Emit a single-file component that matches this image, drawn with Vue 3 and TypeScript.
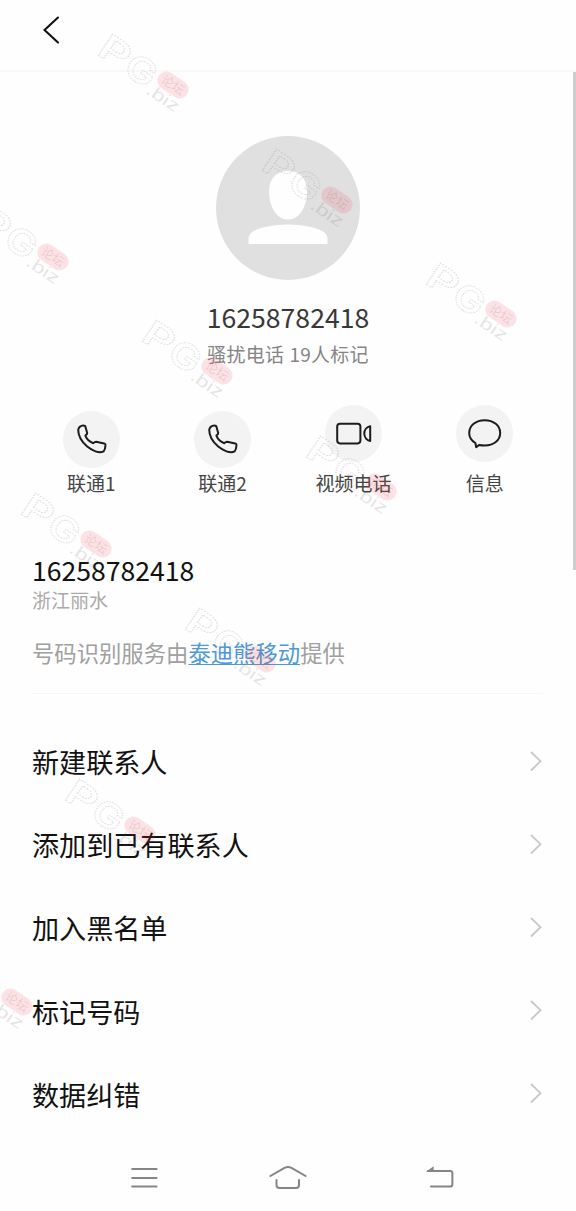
<script setup lang="ts">
interface Action {
  label: string
  icon: 'phone' | 'video' | 'message'
}

interface Mark {
  x: number
  y: number
}

const phoneNumber = '16258782418'

const actions: Action[] = [
  { label: '联通1', icon: 'phone' },
  { label: '联通2', icon: 'phone' },
  { label: '视频电话', icon: 'video' },
  { label: '信息', icon: 'message' },
]

const menu: string[] = ['新建联系人', '添加到已有联系人', '加入黑名单', '标记号码', '数据纠错']

const marks: Mark[] = [
  { x: 173, y: 85 },
  { x: 337, y: 200 },
  { x: 53, y: 257 },
  { x: 501, y: 314 },
  { x: 217, y: 371 },
  { x: 381, y: 487 },
  { x: 96, y: 544 },
  { x: 260, y: 659 },
  { x: 140, y: 830 },
  { x: 17, y: 1002 },
]
</script>

<template>
  <div class="screen">
    <header class="topbar">
      <svg class="back" width="20" height="30" viewBox="0 0 20 30">
        <path d="M16 2.5 L2.5 15 L16 27.5" />
      </svg>
    </header>

    <main class="content">
      <section class="profile">
        <svg class="avatar" width="144" height="144" viewBox="0 0 144 144">
          <circle cx="72" cy="72" r="72" fill="#e0e0e0" />
          <path
            d="M72 35 C84 35 91 43 91 55 C91 70 84 83.5 72 83.5 C60 83.5 53 70 53 55 C53 43 60 35 72 35 Z"
            fill="#fefefe"
          />
          <path
            d="M32.5 107 V103 C32.5 97 38 94 47 91.5 C62 87.5 82 87.5 97 91.5 C106 94 111.5 97 111.5 103 V107 Q111.5 108 110 108 H34 Q32.5 108 32.5 107 Z"
            fill="#fefefe"
          />
        </svg>
        <h1 class="title">{{ phoneNumber }}</h1>
        <p class="tag">骚扰电话 19人标记</p>
      </section>

      <section class="actions">
        <div v-for="a in actions" :key="a.label" class="action">
          <div class="bubble">
            <svg v-if="a.icon === 'phone'" width="57" height="57" viewBox="0 0 57 57">
              <path
                d="M18.4 14.9 Q20.6 14.2 22.3 15.2 L24.2 22 Q24.3 23 22.4 24.6 C23.6 27.8 27.2 31 30.4 32.2 Q31.8 30.6 33.2 30.7 L41.2 32.4 Q42.6 32.8 42.5 34.2 C42.3 37.2 41.8 39 40.6 40.4 C36 42.6 29 39.6 24.2 35.6 C18.6 30.8 15.2 24.6 15.2 18.8 Q15.6 16 18.4 14.9 Z"
              />
            </svg>
            <svg v-else-if="a.icon === 'video'" width="57" height="57" viewBox="0 0 57 57">
              <rect x="12.2" y="18.8" width="23.2" height="19.6" rx="2.8" />
              <path d="M45.2 21.2 V36 C42 35.4 39.3 32.5 39.3 28.6 C39.3 24.7 42 21.8 45.2 21.2 Z" />
            </svg>
            <svg v-else width="57" height="57" viewBox="0 0 57 57">
              <path
                d="M19.4 38 C15.6 35.8 13.2 32.2 13.2 28 C13.2 20.6 19.8 15.2 28.7 15.2 C37.6 15.2 44.2 20.6 44.2 28 C44.2 35.4 37.6 40.4 28.7 40.4 C26.6 40.4 24.6 40.2 23 39.9 L20.2 42.2 Z"
              />
            </svg>
          </div>
          <span class="label">{{ a.label }}</span>
        </div>
      </section>

      <section class="info">
        <div class="number">{{ phoneNumber }}</div>
        <div class="place">浙江丽水</div>
        <p class="provider">号码识别服务由<a class="link">泰迪熊移动</a>提供</p>
      </section>

      <ul class="menu">
        <li v-for="item in menu" :key="item" class="row">
          <span>{{ item }}</span>
          <svg class="chevron" width="14" height="24" viewBox="0 0 14 24">
            <path d="M2 2 L11.5 11.2 L2 20.5" />
          </svg>
        </li>
      </ul>
    </main>

    <nav class="navbar">
      <svg width="28" height="24" viewBox="0 0 28 24">
        <path d="M2.2 3 H26.6 M2.2 12 H26.6 M2.2 20.5 H26.6" />
      </svg>
      <svg class="home" width="40" height="28" viewBox="0 0 40 28">
        <path d="M2.4 12 L16.5 3.8 Q20 2 23.5 3.8 L37.6 12 M8.5 16 V21 Q8.5 24 11.5 24 H28 Q31 24 31 21 V16" />
      </svg>
      <svg width="30" height="28" viewBox="0 0 30 28">
        <path d="M3 7 H25 Q27.4 7 27.4 9.4 V20.2 Q27.4 22.6 25 22.6 H6" />
        <path class="arrowhead" d="M1 7.8 L8.6 2.2 V7.8 Z" />
      </svg>
    </nav>

    <div class="scrollbar"></div>

    <svg class="marks" width="576" height="1211" viewBox="0 0 576 1211">
      <g v-for="(m, i) in marks" :key="i" :transform="`translate(${m.x} ${m.y}) rotate(34)`">
        <text class="big" x="-82" y="17" textLength="31" lengthAdjust="spacingAndGlyphs">P</text>
        <text class="big" x="-50" y="18" textLength="31" lengthAdjust="spacingAndGlyphs">G</text>
        <text class="small" x="-19" y="22" textLength="36" lengthAdjust="spacingAndGlyphs">.biz</text>
        <rect class="pill" x="-17" y="-9" width="34" height="18" rx="9" />
        <text class="forum" x="-12.5" y="4.5">论坛</text>
      </g>
    </svg>
  </div>
</template>

<style>
body {
  background: #fefefe;
}
</style>

<style scoped>
.screen {
  position: relative;
  width: 576px;
  height: 1211px;
  overflow: hidden;
  display: flex;
  flex-direction: column;
  background: #fefefe;
  color: #111;
  font-family: 'Noto Sans CJK SC', sans-serif;
}
.topbar {
  box-sizing: border-box;
  height: 72px;
  padding: 15px 0 0 42px;
  border-bottom: 2px solid #f8f8f8;
}
.back {
  display: block;
  fill: none;
  stroke: #111;
  stroke-width: 2.1;
  stroke-linecap: round;
}
.content {
  height: 1073px;
}
.profile {
  display: flex;
  flex-direction: column;
  align-items: center;
  padding-top: 64px;
}
.avatar {
  display: block;
}
.title {
  margin: 19px 0 0;
  font-size: 26.6px;
  line-height: 36px;
  font-weight: 400;
  color: #383838;
}
.tag {
  margin: 5px 0 0;
  font-size: 19px;
  line-height: 28px;
  letter-spacing: 0.2px;
  word-spacing: 1px;
  color: #858585;
}
.actions {
  display: grid;
  grid-template-columns: repeat(4, 131.2px);
  justify-content: center;
  margin-top: 37px;
  height: 92px;
}
.action {
  display: flex;
  flex-direction: column;
  align-items: center;
  justify-content: space-between;
}
.bubble {
  width: 57px;
  height: 57px;
  border-radius: 50%;
  background: #f3f3f3;
}
.action:nth-child(-n + 2) .bubble {
  margin-top: 6px;
}
.bubble svg {
  display: block;
  fill: none;
  stroke: #1c1c1c;
  stroke-width: 2;
  stroke-linejoin: round;
}
.label {
  font-size: 19px;
  line-height: 28px;
  color: #444;
}
.info {
  margin: 55px 33px 0 32px;
  height: 141px;
  border-bottom: 1px solid #f5f5f5;
}
.number {
  font-size: 26.6px;
  line-height: 36px;
}
.place {
  margin-top: -2px;
  font-size: 19px;
  line-height: 28px;
  color: #aaa;
}
.provider {
  margin: 22px 0 0;
  font-size: 22.35px;
  line-height: 32px;
  color: #a0a0a0;
}
.link {
  color: #4d9ad6;
  text-decoration: underline;
  text-decoration-thickness: 1px;
  text-underline-offset: 2px;
}
.menu {
  list-style: none;
  margin: 26px 0 0;
  padding: 0 33px 0 32px;
}
.row {
  display: flex;
  align-items: center;
  justify-content: space-between;
  height: 83.2px;
  font-size: 27.1px;
}
.chevron {
  fill: none;
  stroke: #c8c8c8;
  stroke-width: 1.8;
}
.navbar {
  height: 66px;
  display: flex;
  align-items: center;
  justify-content: space-between;
  padding: 0 121px 0 130px;
}
.navbar svg {
  display: block;
  fill: none;
  stroke: #858585;
  stroke-width: 2;
  stroke-linecap: round;
}
.navbar .home {
  margin-right: 7px;
}
.navbar .arrowhead {
  fill: #858585;
  stroke: none;
}
.scrollbar {
  position: absolute;
  top: 72px;
  right: 0;
  width: 3px;
  height: 498px;
  background: #cdcdcd;
}
.marks {
  position: absolute;
  inset: 0;
  pointer-events: none;
}
.big {
  font: 600 35px Inter, sans-serif;
  fill: none;
  stroke: rgba(100, 80, 90, 0.2);
  stroke-width: 1;
  stroke-dasharray: 1.5 1;
}
.small {
  font: 400 17px 'Liberation Sans', sans-serif;
  fill: rgba(100, 90, 90, 0.17);
}
.pill {
  fill: rgba(240, 60, 70, 0.14);
}
.forum {
  font-size: 12.5px;
  fill: rgba(120, 70, 70, 0.16);
}
</style>
